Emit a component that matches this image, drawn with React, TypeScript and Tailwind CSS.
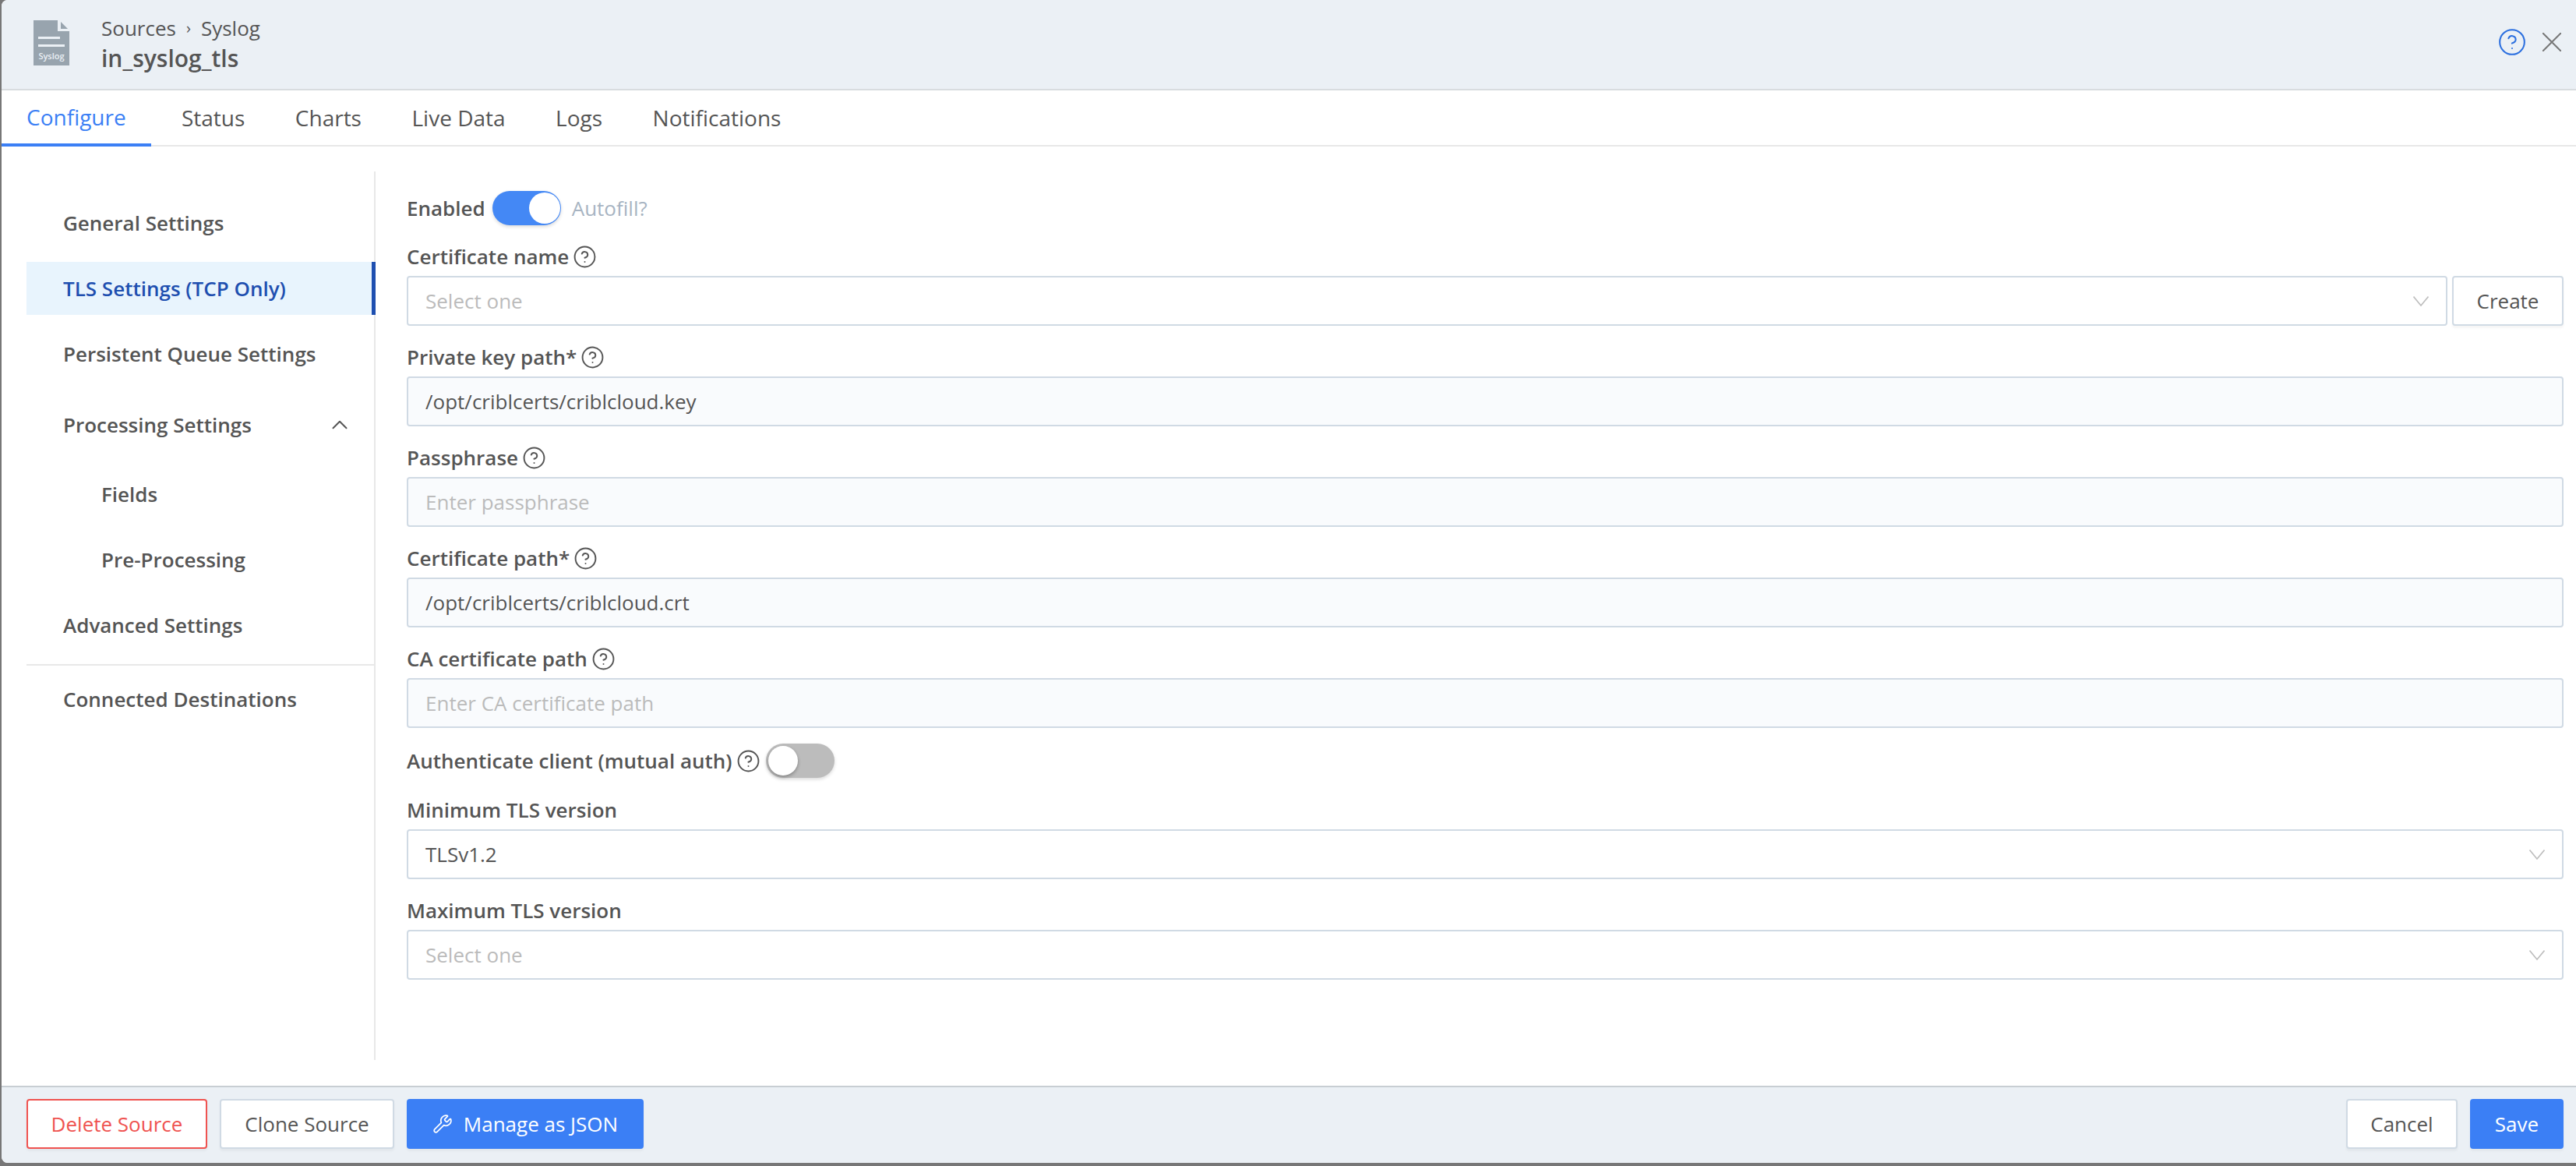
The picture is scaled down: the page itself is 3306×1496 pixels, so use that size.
import { ChevronUp, CircleHelp, Wrench } from "lucide-react";

const tabs = ["Status", "Charts", "Live Data", "Logs", "Notifications"];

const Help = () => <CircleHelp className="ml-[5px] h-[31px] w-[31px] shrink-0 text-[#555]" strokeWidth={1.5} />;

const Chevron = () => (
  <svg viewBox="0 0 20 13" className="h-[13px] w-[20px] shrink-0 text-[#bdbdbd]" fill="none" stroke="currentColor" strokeWidth="1.6">
    <path d="M0.5 0.5L10 12L19.5 0.5" />
  </svg>
);

const Label = ({ text, help }: { text: string; help?: boolean }) => (
  <div className="flex h-12 items-center pb-[2px] text-[26px] font-semibold text-[#555]">
    {text}
    {help && <Help />}
  </div>
);

const TextField = ({ label, value, placeholder, help = true }: { label: string; value?: string; placeholder?: string; help?: boolean }) => (
  <div className="mt-[17px]">
    <Label text={label} help={help} />
    <input
      readOnly
      value={value}
      placeholder={placeholder}
      className="block h-16 w-full rounded border-2 border-[#d0dae4] bg-[#f9fbfd] px-[22px] text-[26px] text-[#555] outline-none placeholder:text-[#bbbbbb]"
    />
  </div>
);

const SelectBox = ({ value, placeholder }: { value?: string; placeholder?: string }) => (
  <div className="flex h-16 min-w-0 flex-1 items-center justify-between rounded border-2 border-[#d0dae4] bg-white pl-[22px] pr-[22px] text-[26px]">
    <span className={value ? "text-[#555]" : "text-[#bbbbbb]"}>{value ?? placeholder}</span>
    <Chevron />
  </div>
);

const Toggle = ({ on }: { on?: boolean }) =>
  on ? (
    <div className="flex h-[44px] w-[88px] items-center justify-end rounded-full bg-[#4488f5] pr-[1px] shadow-[0_2px_4px_rgba(0,0,0,0.15)]">
      <div className="h-[40px] w-[40px] rounded-full bg-white" />
    </div>
  ) : (
    <div className="flex h-[44px] w-[88px] items-center rounded-full bg-[#bcbcbc] pl-[3px] shadow-[0_2px_4px_rgba(0,0,0,0.15)]">
      <div className="h-[38px] w-[38px] rounded-full bg-white shadow-[0_2px_4px_rgba(0,0,0,0.3)]" />
    </div>
  );

const SideItem = ({ text, className, sub }: { text: string; className?: string; sub?: boolean }) => (
  <div className={`flex h-[68px] items-center text-[26px] font-semibold text-[#555] ${sub ? "pl-[96px]" : "pl-[47px]"} ${className ?? ""}`}>
    {text}
  </div>
);

const OutlineButton = ({ children, className }: { children: React.ReactNode; className?: string }) => (
  <button className={`rounded border-2 border-[#d0dae4] bg-white text-[26px] text-[#555] shadow-[0_3px_3px_rgba(0,0,0,0.04)] ${className ?? ""}`}>
    {children}
  </button>
);

const App = () => {
  return (
    <div className="flex h-[1496px] w-[3306px] flex-col overflow-hidden bg-[#777777] pb-1 pl-[2px] font-['Open_Sans',sans-serif]">
      <div className="flex min-h-0 flex-1 flex-col overflow-hidden rounded-bl-lg rounded-tl-lg bg-white">
        {/* Header */}
        <header className="flex h-[116px] shrink-0 items-start justify-between border-b-2 border-[#d8dcdf] bg-[#ebf0f5]">
          <div className="flex items-start pl-[41px] pt-[26px]">
            <svg viewBox="0 0 46 58" className="h-[58px] w-[46px]">
              <path d="M0 0h31v14h15v44H0z" fill="#98a4ae" />
              <path d="M35 2l9 9H35z" fill="#98a4ae" />
              <rect x="6" y="21" width="28" height="3" fill="#ebf0f5" />
              <rect x="6" y="31" width="34" height="3" fill="#ebf0f5" />
              <text x="23" y="50" textAnchor="middle" fontSize="11" fontWeight="600" fill="#ebf0f5" fontFamily="Open Sans">
                Syslog
              </text>
            </svg>
            <div className="-mt-[8px] ml-[41px]">
              <div className="flex h-[36px] items-center text-[26px] text-[#555]">
                Sources <span className="mx-[13px] text-[20px]">›</span> Syslog
              </div>
              <div className="text-[30px] font-semibold leading-[42px] text-[#555]">in_syslog_tls</div>
            </div>
          </div>
          <div className="flex items-center pr-[19px] pt-[35px]">
            <CircleHelp className="h-[38px] w-[38px] text-[#2b6fdf]" strokeWidth={1.3} />
            <svg viewBox="0 0 24 24" className="ml-[20px] h-[24px] w-[24px] text-[#777]" fill="none" stroke="currentColor" strokeWidth="2">
              <path d="M0 0l24 24M24 0L0 24" />
            </svg>
          </div>
        </header>

        {/* Tabs */}
        <nav className="flex h-[72px] shrink-0 border-b-2 border-[#e8e8e8] text-[28px] text-[#555]">
          <div className="-mb-[2px] mr-[7px] flex items-center border-b-4 border-[#3b7ff5] px-[32px] text-[#3b7ff5]">Configure</div>
          {tabs.map((t) => (
            <div key={t} className="flex items-center px-[32.25px]">
              {t}
            </div>
          ))}
        </nav>

        <main className="flex min-h-0 flex-1">
          {/* Sidebar */}
          <aside className="mb-[33px] ml-[32px] mt-[32px] w-[448px] shrink-0 border-r-2 border-[#e8e8e8] pt-[32px]">
            <SideItem text="General Settings" />
            <div className="relative -mr-[2px] mt-[16px] flex h-[68px] items-center border-r-[5px] border-[#1e4fb0] bg-[#e8f4fd] pl-[47px] text-[26px] font-semibold text-[#1e4fb0]">
              TLS Settings (TCP Only)
            </div>
            <SideItem text="Persistent Queue Settings" className="mt-[16px]" />
            <div className="relative mt-[23px]">
              <SideItem text="Processing Settings" />
              <ChevronUp className="absolute left-[385px] top-[17px] h-[34px] w-[34px] text-[#555]" strokeWidth={1.4} />
            </div>
            <SideItem text="Fields" sub className="mt-[21px]" />
            <SideItem text="Pre-Processing" sub className="mt-[16px]" />
            <SideItem text="Advanced Settings" className="mt-[16px]" />
            <div className="mt-[16px] border-t-2 border-[#e8e8e8] pt-[9px]">
              <SideItem text="Connected Destinations" className="mt-0" />
            </div>
          </aside>

          {/* Form */}
          <section className="min-w-0 flex-1 pl-[40px] pr-[16px] pt-[57px]">
            <div className="flex h-[44px] items-center">
              <span className="text-[26px] font-semibold text-[#555]">Enabled</span>
              <span className="ml-[9px]">
                <Toggle on />
              </span>
              <span className="ml-[14px] text-[26px] text-[#a7b4c2]">Autofill?</span>
            </div>

            <div className="mt-[17px]">
              <Label text="Certificate name" help />
              <div className="flex gap-[6px]">
                <SelectBox placeholder="Select one" />
                <OutlineButton className="h-16 w-[143px]">Create</OutlineButton>
              </div>
            </div>

            <TextField label="Private key path*" value="/opt/criblcerts/criblcloud.key" />
            <TextField label="Passphrase" placeholder="Enter passphrase" />
            <TextField label="Certificate path*" value="/opt/criblcerts/criblcloud.crt" />
            <TextField label="CA certificate path" placeholder="Enter CA certificate path" />

            <div className="mt-[20px] flex h-[44px] items-center">
              <span className="text-[26px] font-semibold text-[#555]">Authenticate client (mutual auth)</span>
              <Help />
              <span className="ml-[7px]">
                <Toggle />
              </span>
            </div>

            <div className="mt-[18px]">
              <Label text="Minimum TLS version" />
              <SelectBox value="TLSv1.2" />
            </div>
            <div className="mt-[17px]">
              <Label text="Maximum TLS version" />
              <SelectBox placeholder="Select one" />
            </div>
          </section>
        </main>

        {/* Footer */}
        <footer className="flex h-[99px] shrink-0 items-start justify-between border-t-2 border-[#c8ced3] bg-[#ebf0f5] pl-[32px] pr-[16px] pt-[15px]">
          <div className="flex">
            <button className="h-[64px] w-[232px] rounded border-2 border-[#ef5350] bg-white text-[26px] text-[#ef5350] shadow-[0_3px_3px_rgba(0,0,0,0.04)]">
              Delete Source
            </button>
            <OutlineButton className="ml-[16px] h-[64px] w-[224px]">Clone Source</OutlineButton>
            <button className="ml-[16px] flex h-[64px] w-[304px] items-center justify-center rounded bg-[#3b7ff5] text-[26px] text-white shadow-[0_3px_3px_rgba(0,0,0,0.04)]">
              <Wrench className="mr-[14px] h-[26px] w-[26px]" strokeWidth={1.6} />
              Manage as JSON
            </button>
          </div>
          <div className="flex">
            <OutlineButton className="h-[64px] w-[143px]">Cancel</OutlineButton>
            <button className="ml-[16px] h-[64px] w-[120px] rounded bg-[#3b7ff5] text-[26px] text-white shadow-[0_3px_3px_rgba(0,0,0,0.04)]">
              Save
            </button>
          </div>
        </footer>
      </div>
    </div>
  );
};

export default App;
